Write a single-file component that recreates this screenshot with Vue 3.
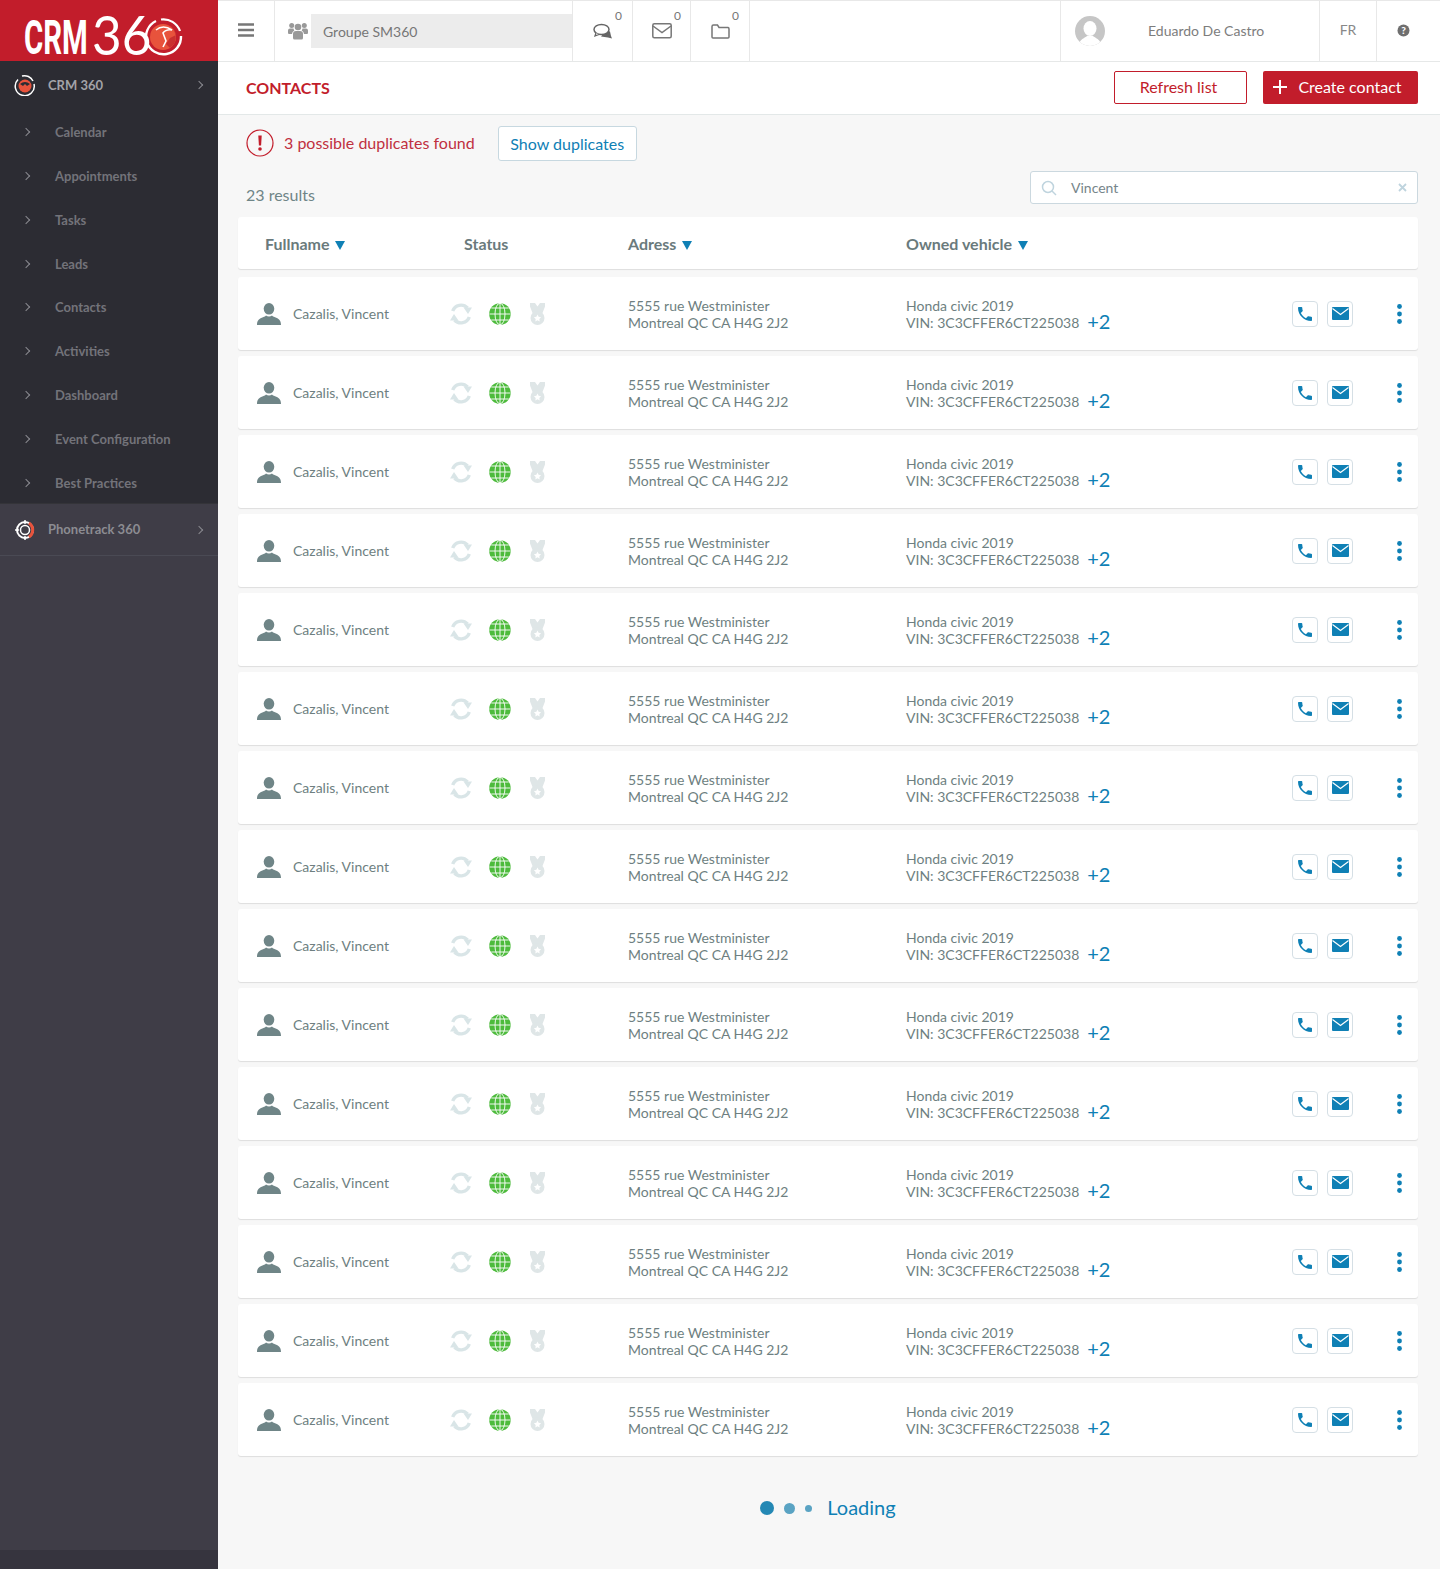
<script setup>
const nav = ['Calendar', 'Appointments', 'Tasks', 'Leads', 'Contacts', 'Activities', 'Dashboard', 'Event Configuration', 'Best Practices']
const rows = Array.from({ length: 15 }, (_, i) => i)
</script>

<template>
  <div class="app">
    <aside class="side">
      <div class="brand">
        <svg class="logo" width="218" height="61" viewBox="0 0 218 61">
          <text transform="translate(24 54) scale(.6 1)" class="logo-crm">CRM</text>
          <text transform="translate(92 55) scale(.93 1)" class="logo-36">36</text>
          <path d="M156 21 A17.500 17.500 0 1 0 181 36" fill="none" stroke="#fff" stroke-width="2.400"/>
          <path d="M161 19.500 A17.500 17.500 0 0 1 180 31" fill="none" stroke="#fff" stroke-width="2.200"/>
          <circle cx="163" cy="37" r="13" fill="#e8533c"/>
          <path d="M167 25 A13 13 0 0 1 170 48 L166 44 L170 38 L176 35 A13 13 0 0 0 167 25Z" fill="#c9302f"/>
          <path d="M156 30 Q163 24 172 30 Q166 29 163 33 L166 41 L163 47" fill="none" stroke="#fff" stroke-width="1.600"/>
        </svg>
      </div>
      <div class="module first">
        <svg class="mod-ic" width="22" height="22" viewBox="0 0 22 22">
          <path d="M4 5.500 A9.500 9.500 0 1 0 20 10" fill="none" stroke="#fff" stroke-width="1.500"/>
          <path d="M8 2 A9.500 9.500 0 0 1 19 7" fill="none" stroke="#fff" stroke-width="1.500"/>
          <circle cx="11" cy="12" r="6.500" fill="#e8533c"/>
          <path d="M6 10 Q11 6 16 10 L13 12 L11 10 L9 12Z" fill="#2c2c33"/>
        </svg>
        <span class="mod-name">CRM 360</span>
        <span class="chev big"></span>
      </div>
      <ul class="nav">
        <li v-for="n in nav" :key="n"><span class="chev"></span><span class="nav-t">{{ n }}</span></li>
      </ul>
      <div class="module alt">
        <svg class="mod-ic" width="22" height="22" viewBox="0 0 22 22">
          <circle cx="11" cy="11" r="8" fill="none" stroke="#fff" stroke-width="2"/>
          <circle cx="11" cy="11" r="4.500" fill="none" stroke="#fff" stroke-width="1.500"/>
          <path d="M11 1v4M11 17v4M1 11h4" stroke="#fff" stroke-width="1.500"/>
          <path d="M15 4 A8.500 8.500 0 0 1 15 18" fill="none" stroke="#e8533c" stroke-width="3"/>
        </svg>
        <span class="mod-name">Phonetrack 360</span>
        <span class="chev big"></span>
      </div>
      <div class="side-foot"></div>
    </aside>

    <main class="main">
      <header class="top">
        <div class="cell burger">
          <svg width="16" height="14" viewBox="0 0 16 14"><path d="M0 1.500h16M0 7h16M0 12.500h16" stroke="#777" stroke-width="2.400"/></svg>
        </div>
        <div class="cell group">
          <svg width="20" height="18" viewBox="0 0 20 18" fill="#999">
            <circle cx="10" cy="5" r="3.300"/><circle cx="3.700" cy="3.500" r="2.500"/><circle cx="16.300" cy="3.500" r="2.500"/>
            <path d="M5 16 v-4 a3 3 0 0 1 3-3 h4 a3 3 0 0 1 3 3 v4 a1.500 1.500 0 0 1-1.500 1.500 h-7 A1.500 1.500 0 0 1 5 16Z"/>
            <path d="M0 10 v-1.500 a2 2 0 0 1 2-2 h3.500 a4.500 4.500 0 0 0 .8 2 a4 4 0 0 0-2.300 3.500 H1.500 A1.500 1.500 0 0 1 0 10Z"/>
            <path d="M20 10 v-1.500 a2 2 0 0 0-2-2 h-3.500 a4.500 4.500 0 0 1-.8 2 a4 4 0 0 1 2.300 3.500 h2.500 A1.500 1.500 0 0 0 20 10Z"/>
          </svg>
          <div class="group-box">Groupe SM360</div>
        </div>
        <div class="cell note n1">
          <svg width="20" height="16" viewBox="0 0 20 16">
            <path d="M18 13 l1 2.500 -4-1 -7-1 5-6 4 1z" fill="#666"/>
            <ellipse cx="8.500" cy="6.500" rx="7.500" ry="5" fill="#fff" stroke="#666" stroke-width="1.500"/>
            <path d="M3 10 l-1 3 4-1.500" fill="#fff" stroke="#666" stroke-width="1.300"/>
          </svg>
          <sup>0</sup>
        </div>
        <div class="cell note n2">
          <svg width="20" height="16" viewBox="0 0 20 16" fill="none" stroke="#777" stroke-width="1.500"><rect x=".8" y=".8" width="18.400" height="14" rx="1.500"/><path d="M1 3l9 6.500L19 3"/></svg>
          <sup>0</sup>
        </div>
        <div class="cell note n3">
          <svg width="19" height="15" viewBox="0 0 19 15" fill="none" stroke="#777" stroke-width="1.500"><path d="M1 13V2.500A1.500 1.500 0 0 1 2.500 1h4L8 3.500h9A1.500 1.500 0 0 1 18 5v8a1 1 0 0 1-1 1H2a1 1 0 0 1-1-1Z"/></svg>
          <sup>0</sup>
        </div>
        <div class="top-space"></div>
        <div class="cell user">
          <svg class="avatar" width="30" height="30" viewBox="0 0 30 30">
            <defs><clipPath id="av"><circle cx="15" cy="15" r="15"/></clipPath></defs>
            <circle cx="15" cy="15" r="15" fill="#c6c6c6"/>
            <g clip-path="url(#av)" fill="#fff">
              <ellipse cx="15" cy="12.500" rx="6.500" ry="7.500"/>
              <path d="M3 31 C4 23 10 22 12 20 h6 C20 22 26 23 27 31Z"/>
            </g>
          </svg>
          <span class="user-name">Eduardo De Castro</span>
        </div>
        <div class="cell lang">FR</div>
        <div class="cell help">
          <svg width="13" height="13" viewBox="0 0 13 13">
            <circle cx="6.500" cy="6.500" r="6" fill="#6f6f6f"/>
            <text x="6.500" y="10" text-anchor="middle" class="q">?</text>
          </svg>
        </div>
      </header>

      <section class="title-bar">
        <h1>CONTACTS</h1>
        <div class="title-actions">
          <button class="btn outline">Refresh list</button>
          <button class="btn solid">
            <svg width="14" height="14" viewBox="0 0 14 14"><path d="M7 0v14M0 7h14" stroke="#fff" stroke-width="2"/></svg>
            <span>Create contact</span>
          </button>
        </div>
      </section>

      <div class="content">
        <div class="dup">
          <svg width="28" height="28" viewBox="0 0 28 28">
            <circle cx="14" cy="14" r="13" fill="none" stroke="#c21d2b" stroke-width="1.200"/>
            <path d="M12.300 6.500h3.400l-.6 10h-2.200z" fill="#c21d2b"/>
            <circle cx="14" cy="20" r="1.800" fill="#c21d2b"/>
          </svg>
          <span class="dup-t">3 possible duplicates found</span>
          <button class="show">Show duplicates</button>
        </div>

        <div class="result-bar">
          <span class="count">23 results</span>
          <div class="search">
            <svg width="16" height="16" viewBox="0 0 16 16" fill="none" stroke="#bfd4de" stroke-width="1.500"><circle cx="7" cy="7" r="5.500"/><path d="M11 11l4 4"/></svg>
            <span class="search-t">Vincent</span>
            <svg class="x" width="9" height="9" viewBox="0 0 9 9"><path d="M1 1l7 7M8 1L1 8" stroke="#bfd4de" stroke-width="1.800"/></svg>
          </div>
        </div>

        <div class="head">
          <div>Fullname <i class="tri"></i></div>
          <div>Status</div>
          <div>Adress <i class="tri"></i></div>
          <div>Owned vehicle <i class="tri"></i></div>
        </div>

        <div class="list">
          <div v-for="r in rows" :key="r" class="row">
            <div class="c-name">
              <svg width="24" height="22" viewBox="0 0 24 22" fill="#6f8587">
                <ellipse cx="12" cy="5.800" rx="5.300" ry="5.800"/>
                <path d="M0 22c0-5 2.500-6.500 6-7.700 1.500-.6 2.500-1.100 3-1.800 1.500 1.200 4.500 1.200 6 0 .5.700 1.500 1.200 3 1.800 3.500 1.200 6 2.700 6 7.700Z"/>
              </svg>
              <span>Cazalis, Vincent</span>
            </div>
            <div class="c-status">
              <svg class="ic-sync" width="22" height="22" viewBox="0 0 22 22" fill="none" stroke="#d9e5e7" stroke-width="3.400">
                <path d="M2.700 8A8.800 8.800 0 0 1 17.500 5"/>
                <path d="M19.300 14A8.800 8.800 0 0 1 4.500 17"/>
                <path d="M13.500 4.500h8.500L18 11z" fill="#d9e5e7" stroke="none"/>
                <path d="M0 17.500h8.500L4 11z" fill="#d9e5e7" stroke="none"/>
              </svg>
              <svg class="ic-globe" width="22" height="22" viewBox="0 0 22 22" fill="none" stroke="#fff" stroke-width=".9">
                <circle cx="11" cy="11" r="10.800" fill="#4dbb3c" stroke="none"/>
                <ellipse cx="11" cy="11" rx="5" ry="10.800"/>
                <path d="M11 0v22M0.500 11h21M2.300 5h17.400M2.300 17h17.400"/>
              </svg>
              <svg class="ic-medal" width="15" height="22" viewBox="0 0 15 22" fill="#dfe6e7">
                <path d="M0 0h5l2.500 3.500L10 0h5v3.500L12.500 10h-10L0 3.500z"/>
                <circle cx="7.500" cy="15" r="7"/>
                <path d="M7.500 11.500l1.100 2.300 2.500.4-1.800 1.800.4 2.500-2.200-1.200-2.200 1.200.4-2.500-1.800-1.800 2.500-.4z" fill="#fff"/>
              </svg>
            </div>
            <div class="c-addr">5555 rue Westminister<br>Montreal QC CA H4G 2J2</div>
            <div class="c-veh">
              <div>Honda civic 2019<br>VIN: 3C3CFFER6CT225038</div>
              <span class="plus">+2</span>
            </div>
            <div class="c-act">
              <button class="ib">
                <svg width="14" height="14" viewBox="3 3 18 18"><path fill="#0f80b5" d="M6.620 10.790c1.440 2.830 3.760 5.140 6.590 6.590l2.200-2.200c.27-.27.67-.36 1.020-.24 1.120.37 2.330.57 3.570.57.55 0 1 .45 1 1V20c0 .55-.45 1-1 1-9.390 0-17-7.610-17-17 0-.55.45-1 1-1h3.500c.55 0 1 .45 1 1 0 1.250.2 2.450.57 3.570.11.35.03.74-.25 1.020l-2.200 2.200z"/></svg>
              </button>
              <button class="ib">
                <svg width="17" height="13" viewBox="0 0 17 13"><rect width="17" height="13" rx="1" fill="#0f80b5"/><path d="M.5 1.500l8 6 8-6" fill="none" stroke="#fff" stroke-width="1.200"/></svg>
              </button>
              <svg class="dots" width="5" height="20" viewBox="0 0 5 20" fill="#0f80b5"><circle cx="2.500" cy="2.500" r="2.400"/><circle cx="2.500" cy="10" r="2.400"/><circle cx="2.500" cy="17.500" r="2.400"/></svg>
            </div>
          </div>
        </div>

        <div class="loading">
          <i class="d1"></i><i class="d2"></i><i class="d3"></i>
          <span>Loading</span>
        </div>
      </div>
    </main>
  </div>
</template>

<style>
body { margin: 0; background: #f7f7f7; }
</style>

<style scoped>
* { box-sizing: border-box; }
.app { display: flex; width: 1440px; height: 1569px; font-family: Lato, "Open Sans", sans-serif; overflow: hidden; }
.side { width: 218px; flex: none; background: #3f3d47; display: flex; flex-direction: column; }
.brand { height: 61px; background: #c21d2b; }
.logo { display: block; overflow: visible; }
.logo-crm { font-family: Roboto, sans-serif; font-weight: 700; font-size: 49px; fill: #fff; }
.logo-36 { font-family: Lato, sans-serif; font-weight: 400; font-size: 55px; fill: #fff; }
.module { height: 48px; background: #2c2c33; display: flex; align-items: center; padding: 0 14px; color: #a3a3a8; font-size: 13px; font-weight: 700; }
.module .mod-ic { flex: none; }
.mod-name { margin-left: 12px; flex: 1; margin-top: -2px; }
.first .mod-name { margin-top: 0; }
.module.alt { height: 53px; background: #3f3d47; border-top: 1px solid #343439; border-bottom: 1px solid #4a4a54; color: #8c8c92; }
.chev { display: inline-block; width: 6px; height: 6px; border-top: 1px solid #8a8a90; border-right: 1px solid #8a8a90; transform: rotate(45deg); flex: none; }
.chev.big { margin-right: 2px; }
.nav { list-style: none; margin: 0; padding: 0; background: #2c2c33; height: 394px; }
.nav li { height: 43.800px; display: flex; align-items: center; padding-left: 23px; color: #73737a; font-size: 13px; font-weight: 700; position: relative; top: 1.400px; }
.nav-t { margin-left: 26px; }
.side-foot { flex: 1; border-bottom: 19px solid #36343e; }

.main { flex: 1; min-width: 0; display: flex; flex-direction: column; }
.top { height: 62px; flex: none; display: flex; background: #fff; border-top: 1px solid #e8e8e8; border-bottom: 1px solid #e6e8e8; color: #777; }
.cell { display: flex; align-items: center; position: relative; border-right: 1px solid #e8e8e8; }
.burger { width: 57px; padding-left: 20px; padding-bottom: 2px; }
.group { width: 298px; padding-left: 13px; gap: 3px; }
.group-box { width: 261px; height: 34px; background: #ececec; color: #777; font-size: 14px; line-height: 35px; padding-left: 12px; }
.note sup { position: absolute; top: 8px; font-size: 12px; line-height: 14px; color: #777; }
.n1 { width: 60px; padding-left: 20px; }
.n1 sup { left: 42px; }
.n2 { width: 58px; padding-left: 19px; }
.n2 sup { left: 41px; }
.n3 { width: 59px; padding-left: 20px; }
.n3 sup { left: 41px; }
.top-space { flex: 1; border-right: 1px solid #e8e8e8; }
.user { width: 259px; padding-left: 14px; }
.user-name { margin-left: 43px; font-size: 14px; color: #7d7d7d; margin-top: -1px; }
.lang { width: 57px; justify-content: center; font-size: 14px; color: #888; padding-bottom: 3px; }
.help { width: 63px; border-right: 0; padding-left: 20px; padding-bottom: 2px; }
.q { font-family: Lato, sans-serif; font-weight: 900; font-size: 10px; fill: #fff; }

.title-bar { height: 53px; flex: none; background: #fff; border-bottom: 1px solid #e3e8e8; display: flex; align-items: center; justify-content: space-between; padding: 0 22px 0 28px; }
h1 { margin: -2px 0 0; font-size: 16px; font-weight: 700; color: #c21d2b; }
.title-actions { display: flex; gap: 16px; margin-top: -1px; }
.btn { height: 33px; border-radius: 2px; font-family: inherit; font-size: 16px; display: flex; align-items: center; justify-content: center; padding: 0 0 2px; }
.outline { width: 133px; background: #fff; border: 1px solid #c21d2b; color: #c21d2b; padding-right: 4px; }
.solid { width: 155px; background: #c21d2b; border: 0; color: #fff; gap: 11px; padding-right: 6px; }

.content { flex: 1; padding: 10px 22px 0 20px; background: #f7f7f7; }
.dup { display: flex; align-items: center; height: 36px; padding-left: 8px; }
.dup-t { margin-left: 10px; color: #c0303f; font-size: 16px; margin-top: -1px; }
.show { margin-left: 23px; width: 139px; height: 35px; background: #fff; border: 1px solid #c7d8e0; border-radius: 3px; color: #0f80b5; font-family: inherit; font-size: 16px; padding: 0; }
.result-bar { display: flex; justify-content: space-between; align-items: center; height: 33px; margin-top: 10px; padding-left: 8px; }
.count { color: #6f8587; font-size: 16px; margin-top: 14px; }
.search { width: 388px; height: 33px; background: #fff; border: 1px solid #cbd8df; border-radius: 3px; display: flex; align-items: center; padding: 0 10px; position: relative; }
.search-t { margin-left: 14px; font-size: 14px; color: #76858a; padding-bottom: 1px; }
.search .x { margin-left: auto; }

.head, .row { display: grid; background: #fff; border-radius: 3px; box-shadow: 0 1px 1px rgba(0, 0, 0, 0.1); }
.head { margin-top: 13px; height: 52px; grid-template-columns: 199px 164px 278px 1fr; padding-left: 27px; align-items: center; color: #6a7a7c; font-size: 16px; font-weight: 700; }
.tri { display: inline-block; width: 0; height: 0; border-left: 5px solid transparent; border-right: 5px solid transparent; border-top: 9px solid #0f80b5; margin-left: 2px; }
.list { margin-top: 8px; display: flex; flex-direction: column; gap: 6px; }
.row { height: 73px; grid-template-columns: 193px 178px 278px 386px 1fr; padding-left: 19px; align-items: center; color: #6e7f81; font-size: 14px; }
.c-name { display: flex; align-items: center; gap: 12px; }
.c-status { display: flex; align-items: center; }
.ic-globe { margin-left: 17px; }
.ic-medal { margin-left: 19px; }
.c-addr { line-height: 17px; margin-top: 1px; }
.c-veh { display: flex; align-items: center; gap: 8px; line-height: 17px; margin-top: 1px; }
.plus { font-size: 20px; color: #0f80b5; line-height: 24px; margin-top: 14px; }
.c-act { display: flex; align-items: center; }
.ib { width: 26px; height: 26px; padding: 0; border: 1px solid #d5dfe5; border-radius: 4px; background: #fff; display: flex; align-items: center; justify-content: center; margin-right: 9px; }
.dots { margin-left: 35px; }
.loading { display: flex; align-items: center; justify-content: center; height: 101px; color: #0f80b5; font-size: 20px; }
.loading i { display: block; border-radius: 50%; margin-top: 3px; }
.d1 { width: 14px; height: 14px; background: #2488b4; }
.d2 { width: 11px; height: 11px; background: #5aa3c3; margin-left: 10px; }
.d3 { width: 7px; height: 7px; background: #5aa3c3; margin-left: 10px; }
.loading span { margin-left: 15px; }
</style>
